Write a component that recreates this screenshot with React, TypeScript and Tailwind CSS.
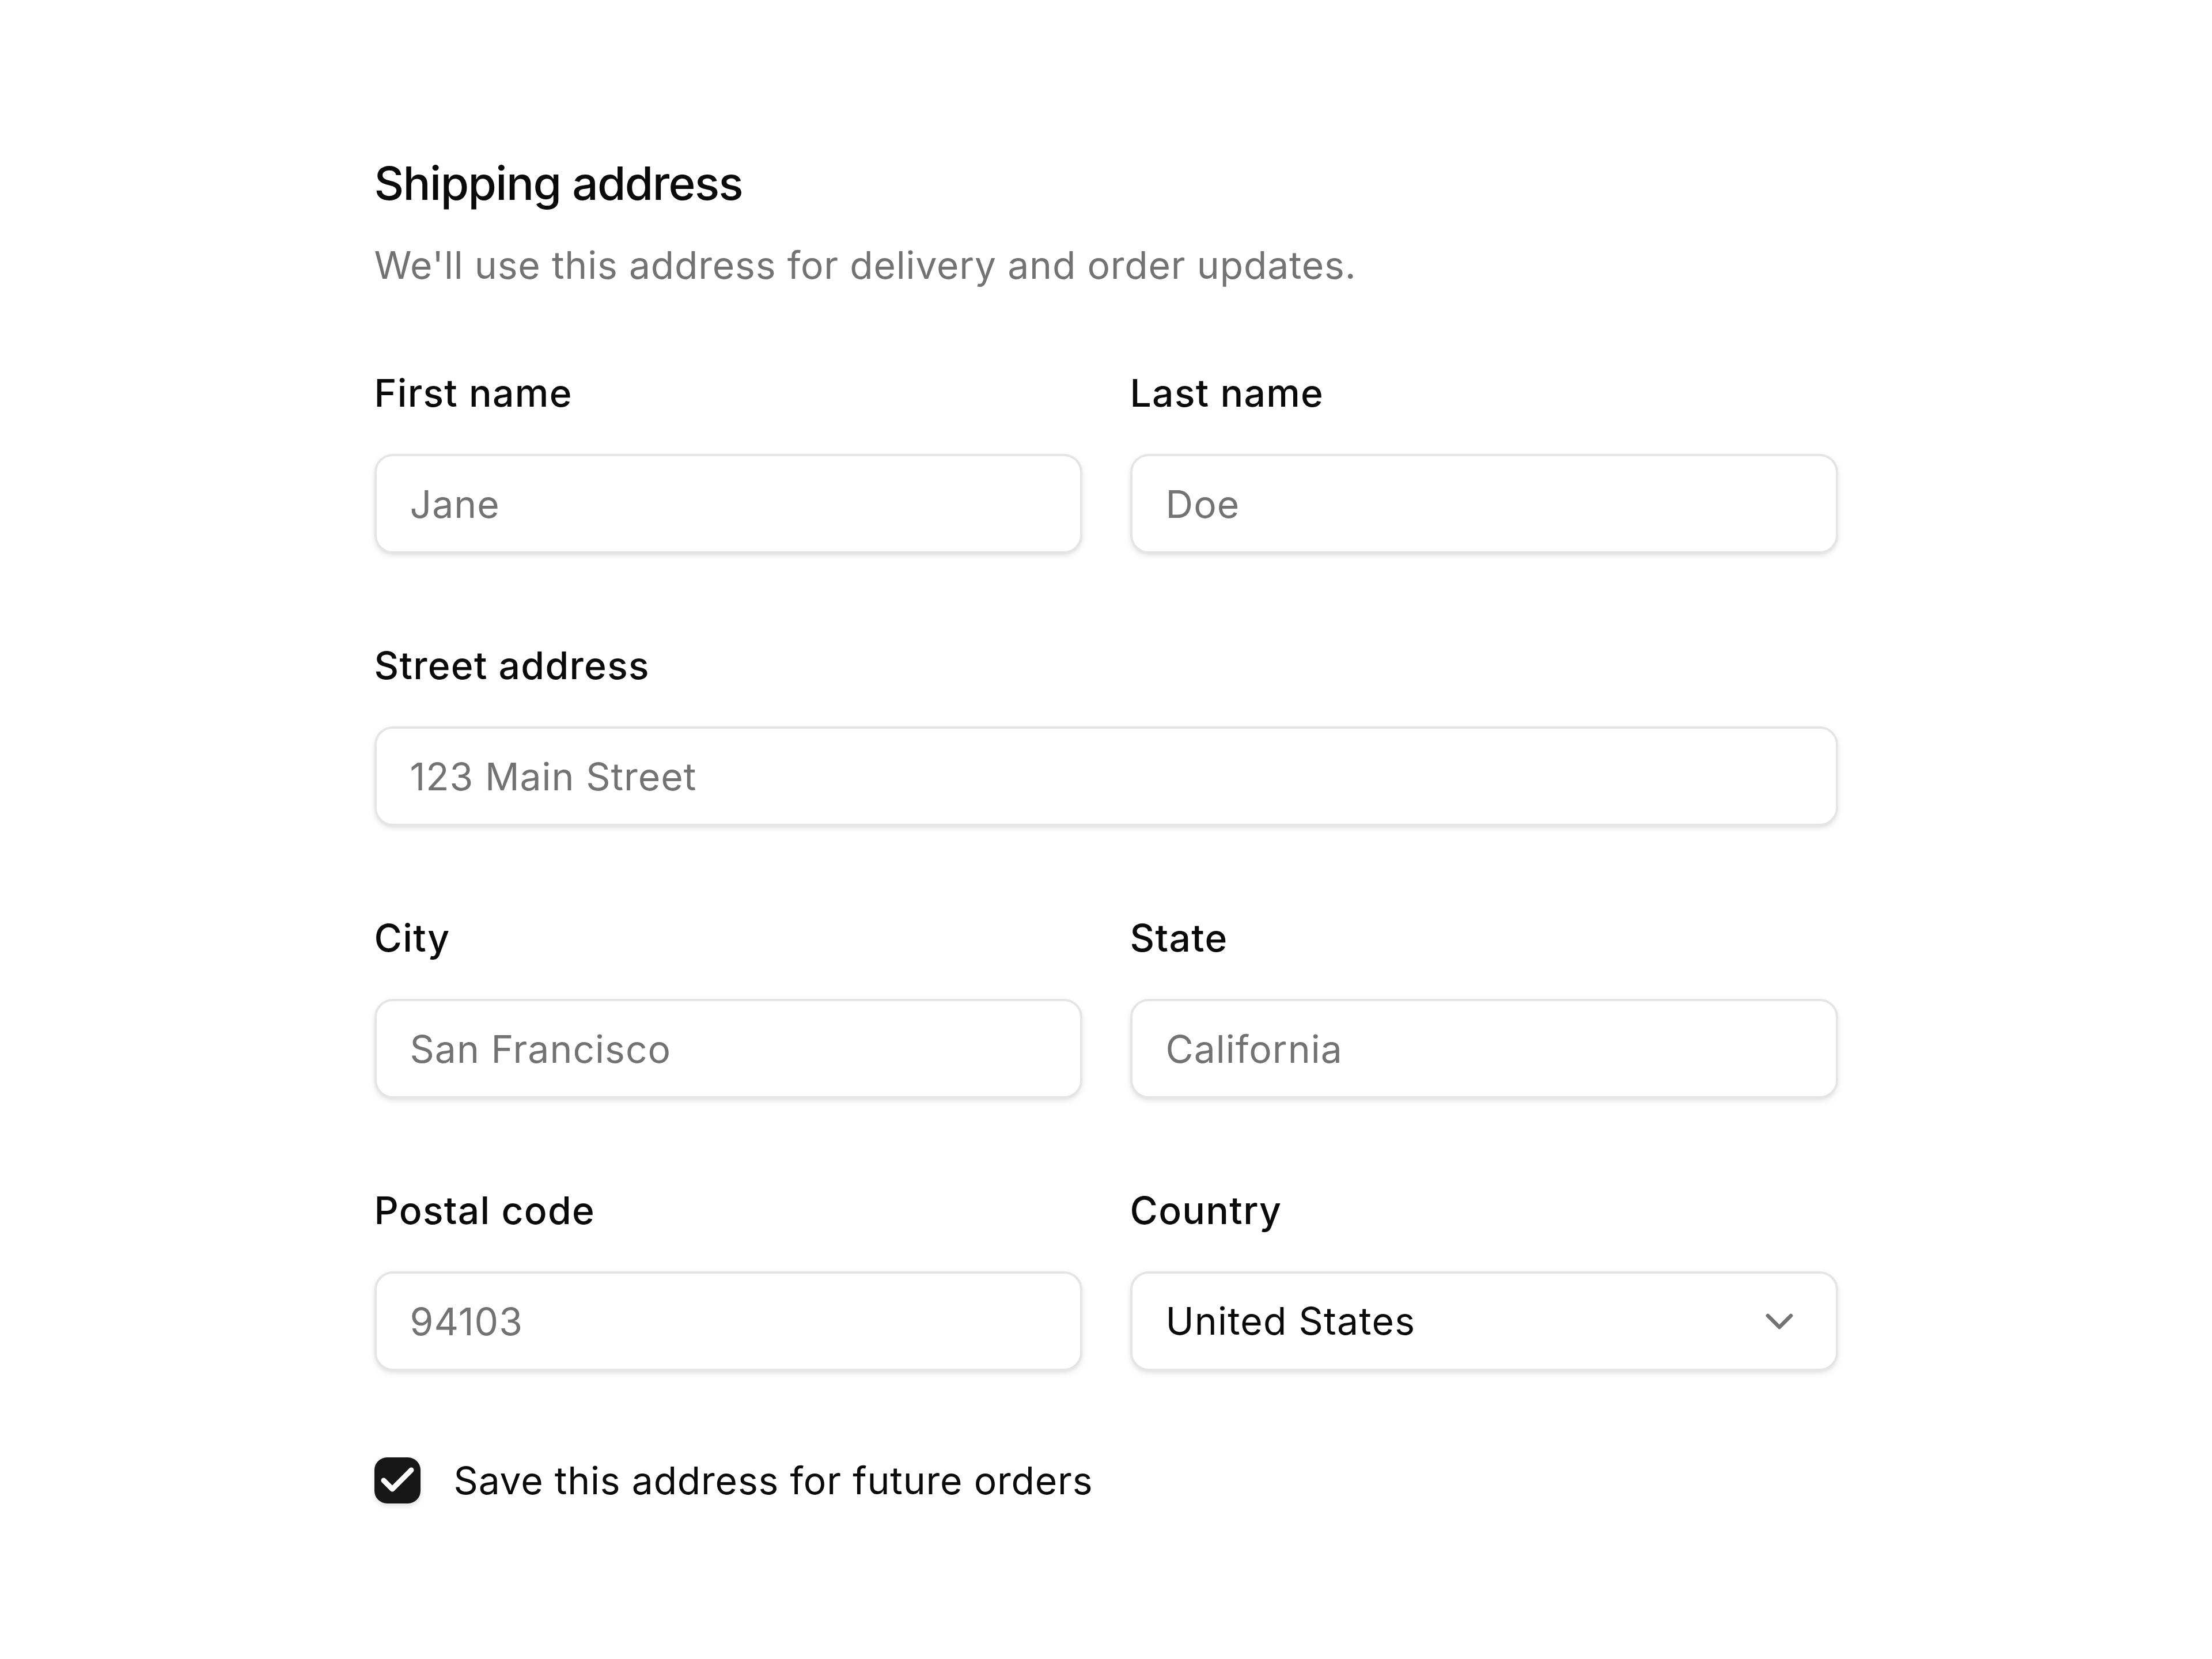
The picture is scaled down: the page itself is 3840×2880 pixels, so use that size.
import { Check, ChevronDown } from "lucide-react";

type FieldProps = {
  label: string;
  placeholder: string;
};

function Field({ label, placeholder }: FieldProps) {
  return (
    <label className="flex flex-col gap-[58px]">
      <span className="text-[66px] leading-[96px] font-medium tracking-[1.3px]">
        {label}
      </span>
      <input
        type="text"
        placeholder={placeholder}
        className="h-[173px] w-full rounded-[32px] border-[4px] border-[#e5e5e5] bg-white px-[58px] text-[66px] tracking-[1px] shadow-[0_4px_12px_0_rgba(0,0,0,0.08),0_4px_8px_-4px_rgba(0,0,0,0.1)] outline-none placeholder:text-[#737373]"
      />
    </label>
  );
}

export default function App() {
  return (
    <div className="min-h-screen bg-white font-['Inter','Liberation_Sans',sans-serif] text-[#0a0a0a]">
      <div className="mx-auto w-[2541px] pt-[262px] pb-[200px]">
        <h1 className="text-[80px] leading-[112px] font-medium tracking-[-1.6px]">
          Shipping address
        </h1>
        <p className="mt-[38px] text-[66px] leading-[96px] tracking-[0.8px] text-[#737373]">
          We'll use this address for delivery and order updates.
        </p>

        <form className="mt-[126px] flex flex-col gap-[146px]">
          <div className="grid grid-cols-2 gap-x-[83px]">
            <Field label="First name" placeholder="Jane" />
            <Field label="Last name" placeholder="Doe" />
          </div>

          <Field label="Street address" placeholder="123 Main Street" />

          <div className="grid grid-cols-2 gap-x-[83px]">
            <Field label="City" placeholder="San Francisco" />
            <Field label="State" placeholder="California" />
          </div>

          <div className="grid grid-cols-2 gap-x-[83px]">
            <Field label="Postal code" placeholder="94103" />
            <div className="flex flex-col gap-[58px]">
              <span className="text-[66px] leading-[96px] font-medium tracking-[1.3px]">
                Country
              </span>
              <button
                type="button"
                className="flex h-[173px] w-full items-center justify-between rounded-[32px] border-[4px] border-[#e5e5e5] bg-white pl-[58px] pr-[58px] text-[66px] tracking-[1.2px] shadow-[0_4px_12px_0_rgba(0,0,0,0.08),0_4px_8px_-4px_rgba(0,0,0,0.1)]"
              >
                <span>United States</span>
                <ChevronDown size={80} strokeWidth={2} className="text-[#737373]" />
              </button>
            </div>
          </div>

          <div className="-mt-[4px] flex items-center gap-[58px]">
            <span className="flex h-[80px] w-[80px] items-center justify-center rounded-[22px] bg-[#171717] shadow-[0_4px_8px_rgba(0,0,0,0.12)]">
              <Check size={72} strokeWidth={3} className="text-white" />
            </span>
            <span className="text-[66px] leading-[96px] tracking-[0.8px]">
              Save this address for future orders
            </span>
          </div>
        </form>
      </div>
    </div>
  );
}
